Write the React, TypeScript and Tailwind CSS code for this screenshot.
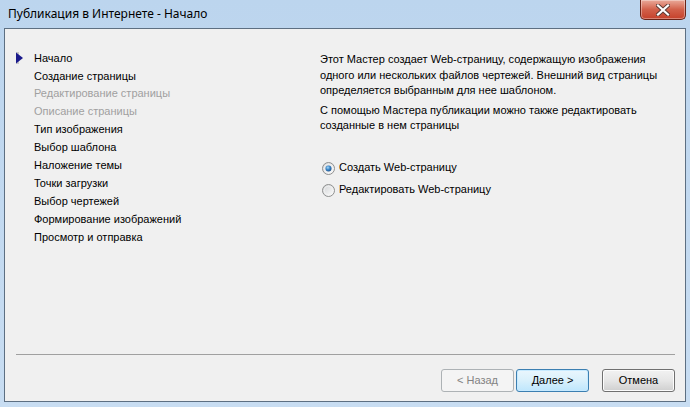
import React from 'react';

const steps = [
  { label: 'Начало', active: true },
  { label: 'Создание страницы' },
  { label: 'Редактирование страницы', disabled: true },
  { label: 'Описание страницы', disabled: true },
  { label: 'Тип изображения' },
  { label: 'Выбор шаблона' },
  { label: 'Наложение темы' },
  { label: 'Точки загрузки' },
  { label: 'Выбор чертежей' },
  { label: 'Формирование изображений' },
  { label: 'Просмотр и отправка' },
];

function Radio({ checked }: { checked?: boolean }) {
  return (
    <svg width="13" height="13" viewBox="0 0 13 13" className="shrink-0">
      <defs>
        <linearGradient id={checked ? 'rg1' : 'rg0'} x1="0" y1="0" x2="1" y2="1">
          <stop offset="0" stopColor="#cfd1d3" />
          <stop offset="1" stopColor="#ffffff" />
        </linearGradient>
        <radialGradient id="dot" cx="0.4" cy="0.35" r="0.7">
          <stop offset="0" stopColor="#a6d8f8" />
          <stop offset="0.5" stopColor="#3a86c8" />
          <stop offset="1" stopColor="#1d4f8a" />
        </radialGradient>
      </defs>
      <circle cx="6.5" cy="6.5" r="6" fill={`url(#${checked ? 'rg1' : 'rg0'})`} stroke="#8e8f8f" strokeWidth="1" />
      <circle cx="6.5" cy="6.5" r="4.3" fill="none" stroke="#f4f4f4" strokeWidth="0.8" />
      {checked && <circle cx="6.5" cy="6.5" r="3" fill="url(#dot)" />}
    </svg>
  );
}

export default function App() {
  const sans = { fontFamily: '"Liberation Sans", Arial, sans-serif' };
  return (
    <div className="w-[690px] h-[407px] flex flex-col bg-gradient-to-b from-[#bcd5ee] to-[#c8ddf2] overflow-hidden select-none">

      {/* ── Title bar ── */}
      <div className="h-[28px] flex items-start justify-between shrink-0">
        <span className="pl-[8px] pt-[6px] text-[12px] leading-[16px] text-black" style={{ fontFamily: '"Noto Sans", "Open Sans", sans-serif' }}>
          Публикация в Интернете - Начало
        </span>
        <div className="mr-[4px] w-[46px] h-[20px] rounded-b-[5px] border border-t-0 border-[#6a2418] bg-gradient-to-b from-[#e9a99a] via-[#d2604a] to-[#c5402a] flex items-center justify-center shadow-[inset_0_0_0_1px_rgba(255,255,255,0.35)]">
          <svg width="14" height="12" viewBox="0 0 14 12">
            <path d="M2 1.5 L12 10.5 M12 1.5 L2 10.5" stroke="#5a3a34" strokeWidth="4" strokeLinecap="square" />
            <path d="M2 1.5 L12 10.5 M12 1.5 L2 10.5" stroke="#ffffff" strokeWidth="2.2" strokeLinecap="square" />
          </svg>
        </div>
      </div>

      {/* ── Client area ── */}
      <div className="mx-[4px] mb-[5px] flex-1 flex flex-col bg-[#f0f0f0] border border-[#5d6f82] text-[11px] text-black" style={sans}>

        {/* Content */}
        <div className="h-[325px] flex shrink-0">
          {/* Steps */}
          <div className="w-[315px] pt-[20px] pl-[11px]">
            {steps.map((s) => (
              <div key={s.label} className="h-[17.9px] flex items-center">
                <span className="w-[18px] flex items-center">
                  {s.active && (
                    <svg width="7" height="12" viewBox="0 0 7 12">
                      <rect x="0" y="0" width="3" height="12" fill="#c8c8c8" />
                      <path d="M0 0.5 L7 6 L0 11.5 Z" fill="#1a1a8c" />
                    </svg>
                  )}
                </span>
                <span className={s.disabled ? 'text-[#a0a0a0]' : 'text-black'}>{s.label}</span>
              </div>
            ))}
          </div>

          {/* Description */}
          <div className="flex-1 pt-[23px] leading-[15.5px]">
            <p>
              Этот Мастер создает Web-страницу, содержащую изображения<br />
              одного или нескольких файлов чертежей. Внешний вид страницы<br />
              определяется выбранным для нее шаблоном.
            </p>
            <p className="mt-[4px]">
              С помощью Мастера публикации можно также редактировать<br />
              созданные в нем страницы
            </p>

            <div className="mt-[28px] flex flex-col gap-[9px] pl-[2px]">
              <label className="flex items-center gap-[4px] h-[13px]">
                <Radio checked />
                <span>Создать Web-страницу</span>
              </label>
              <label className="flex items-center gap-[4px] h-[13px]">
                <Radio />
                <span>Редактировать Web-страницу</span>
              </label>
            </div>
          </div>
        </div>

        {/* Separator */}
        <div className="ml-[11px] mr-[10px] h-px bg-[#a0a0a0] shrink-0" />

        {/* Buttons */}
        <div className="mt-[14px] flex justify-end pr-[10px]">
          <button disabled className="w-[73px] h-[23px] rounded-[3px] border border-[#adb2b5] bg-[#f4f4f4] text-[#838383]">
            &lt; Назад
          </button>
          <button className="ml-[2px] w-[73px] h-[23px] rounded-[3px] border border-[#3c7fb1] bg-gradient-to-b from-[#eaf6fd] via-[#d9f0fc] to-[#bee6fd] shadow-[inset_0_0_0_1px_#c7eaff] text-black">
            Далее &gt;
          </button>
          <button className="ml-[13px] w-[73px] h-[23px] rounded-[3px] border border-[#707070] bg-gradient-to-b from-[#f2f2f2] via-[#e6e6e6] to-[#cfcfcf] shadow-[inset_0_0_0_1px_#fcfcfc] text-black">
            Отмена
          </button>
        </div>
      </div>
    </div>
  );
}
